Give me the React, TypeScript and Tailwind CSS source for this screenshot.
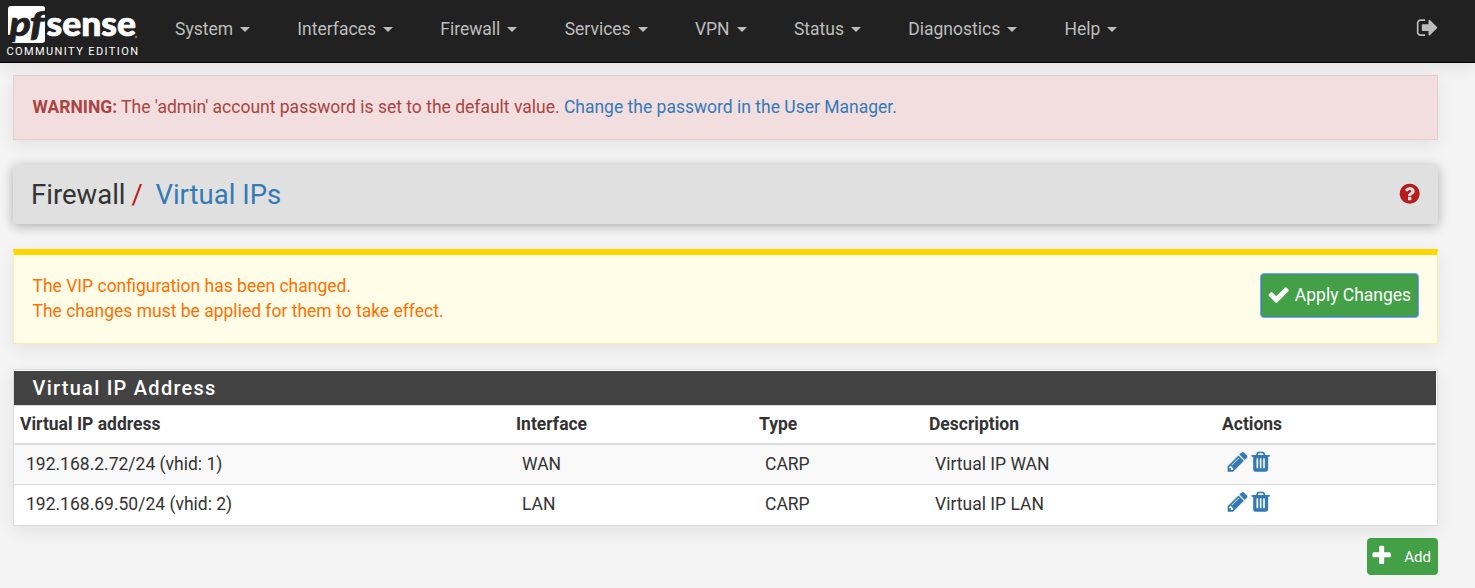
import React from "react";

const icons = {
  pencil:
    "M491 1536l91-91-235-235-91 91v107h128v128h107zm523-928q0-22-22-22-10 0-17 7l-542 542q-7 7-7 17 0 22 22 22 10 0 17-7l542-542q7-7 7-17zm-54-192l416 416-832 832h-416v-416zm683 96q0 53-37 90l-166 166-416-416 166-165q36-38 90-38 53 0 91 38l235 234q37 39 37 91z",
  trash:
    "M704 1376v-704q0-14-9-23t-23-9h-64q-14 0-23 9t-9 23v704q0 14 9 23t23 9h64q14 0 23-9t9-23zm256 0v-704q0-14-9-23t-23-9h-64q-14 0-23 9t-9 23v704q0 14 9 23t23 9h64q14 0 23-9t9-23zm256 0v-704q0-14-9-23t-23-9h-64q-14 0-23 9t-9 23v704q0 14 9 23t23 9h64q14 0 23-9t9-23zm-544-992h448l-48-117q-7-9-17-11h-317q-10 2-17 11zm928 32v64q0 14-9 23t-23 9h-96v948q0 83-47 143.5t-113 60.5h-832q-66 0-113-58.5t-47-141.5v-952h-96q-14 0-23-9t-9-23v-64q0-14 9-23t23-9h309l70-167q15-37 54-63t79-26h320q40 0 79 26t54 63l70 167h309q14 0 23 9t9 23z",
  check:
    "M1671 566q0 40-28 68l-724 724-136 136q-28 28-68 28t-68-28l-136-136-362-362q-28-28-28-68t28-68l136-136q28-28 68-28t68 28l294 295 656-657q28-28 68-28t68 28l136 136q28 28 28 68z",
  plus: "M1600 736v192q0 40-28 68t-68 28h-416v416q0 40-28 68t-68 28h-192q-40 0-68-28t-28-68v-416h-416q-40 0-68-28t-28-68v-192q0-40 28-68t68-28h416v-416q0-40 28-68t68-28h192q40 0 68 28t28 68v416h416q40 0 68 28t28 68z",
  question:
    "M1024 1376v-192q0-14-9-23t-23-9h-192q-14 0-23 9t-9 23v192q0 14 9 23t23 9h192q14 0 23-9t9-23zm256-672q0-88-55.5-163t-138.5-116-170-41q-243 0-371 213-15 24 8 42l132 100q7 6 19 6 16 0 25-12 53-68 86-92 34-24 86-24 48 0 85.5 26t37.5 59q0 38-20 61t-68 45q-63 28-115.5 86.5t-52.5 125.5v36q0 14 9 23t23 9h192q14 0 23-9t9-23q0-19 21.5-49.5t54.5-49.5q32-18 49-28.5t46-35 44.5-48 28-60.5 12.5-81zm384 192q0 209-103 385.5t-279.5 279.5-385.5 103-385.5-103-279.5-279.5-103-385.5 103-385.5 279.5-279.5 385.5-103 385.5 103 279.5 279.5 103 385.5z",
  signOut:
    "M704 1440q0 4 1 20t.5 26.5-3 23.5-10 19.5-20.5 6.5h-320q-119 0-203.5-84.5t-84.5-203.5v-704q0-119 84.5-203.5t203.5-84.5h320q13 0 22.5 9.5t9.5 22.5q0 4 1 20t.5 26.5-3 23.5-10 19.5-20.5 6.5h-320q-66 0-113 47t-47 113v704q0 66 47 113t113 47h312l11.5 1 11.5 3 8 5.5 7 9 2 13.5zm928-544q0 26-19 45l-544 544q-19 19-45 19t-45-19-19-45v-288h-448q-26 0-45-19t-19-45v-384q0-26 19-45t45-19h448v-288q0-26 19-45t45-19 45 19l544 544q19 19 19 45z",
};

function Icon({ name, className = "" }: { name: keyof typeof icons; className?: string }) {
  return (
    <svg viewBox="0 0 1792 1792" fill="currentColor" aria-hidden="true" className={`size-[23.33px] shrink-0 ${className}`}>
      <path d={icons[name]} />
    </svg>
  );
}

function Logo() {
  return (
    <svg width="140" height="58" viewBox="0 0 140 58" className="shrink-0">
      <path d="M11 6H42.500Q45 6 45 8.500V40Q45 43 42 43H12L14 34L8 35V9Q8 6 11 6Z" fill="#fff" />
      <g fill="#212121" stroke="#212121" strokeWidth=".6" className="font-['Lato'] text-[35px] font-black italic">
        <text x="9.500" y="36" textLength="21.500" lengthAdjust="spacingAndGlyphs">p</text>
        <text x="29.500" y="36" textLength="15" lengthAdjust="spacingAndGlyphs">f</text>
      </g>
      <text x="46.500" y="36" textLength="89.500" lengthAdjust="spacingAndGlyphs" fill="#fff" stroke="#fff" strokeWidth=".7" className="font-['Lato'] text-[34px] font-black">sense</text>
      <circle cx="136" cy="37" r="1.300" fill="#777" />
      <text x="6.500" y="55" textLength="131.500" fill="#fff" className="font-['Roboto'] text-[11px]">COMMUNITY EDITION</text>
    </svg>
  );
}

const menu = ["System", "Interfaces", "Firewall", "Services", "VPN", "Status", "Diagnostics", "Help"];

const rows = [
  ["192.168.2.72/24 (vhid: 1)", "WAN", "CARP", "Virtual IP WAN"],
  ["192.168.69.50/24 (vhid: 2)", "LAN", "CARP", "Virtual IP LAN"],
];

const grid = "grid grid-cols-[496px_243px_170px_293px_1fr]";

export default function App() {
  return (
    <div className="h-[588px] overflow-hidden bg-[#f4f4f4] font-['Roboto',sans-serif] text-[17.5px] leading-[25px] text-[#333]">
      <nav className="flex h-[63px] border-b border-black bg-[#212121] text-[#bdbdbd] shadow-[0_6px_14px_rgba(0,0,0,0.07)]">
        <Logo />
        <ul className="ml-[35px] flex gap-[47.3px] pt-[17px]">
          {menu.map((m) => (
            <li key={m} className="flex h-[25px] items-center gap-[7px]">
              {m}
              <span className="-mt-px border-x-5 border-t-5 border-x-transparent border-t-[#bdbdbd]" />
            </li>
          ))}
        </ul>
        <Icon name="signOut" className="mt-[15.5px] mr-[36px] ml-auto" />
      </nav>

      <main className="mr-[37px] ml-[13px] pt-3">
        <div className="h-[65px] border border-[#ebccd1] bg-[#f2dede] px-[18.500px] py-[19px] text-[#a94442] shadow-[0_5px_16px_rgba(0,0,0,0.08)]">
          <b>WARNING:</b> The 'admin' account password is set to the default value.{" "}
          <a className="text-[#337ab7]">Change the password in the User Manager.</a>
        </div>

        <header className="mt-[25px] flex h-[59px] items-center justify-between rounded-[3px] bg-[#e0e0e0] pr-[17px] pl-[18px] text-[27.5px] shadow-[0_2px_12px_rgba(0,0,0,0.3)]">
          <h1 className="flex">
            Firewall<span className="mr-[12.5px] ml-[6px] text-[#b71c1c]">/</span>
            <a className="text-[#337ab7]">Virtual IPs</a>
          </h1>
          <Icon name="question" className="-mt-px text-[#b71c1c]" />
        </header>

        <div className="mt-[25px] flex h-[95px] justify-between border border-t-[6px] border-[#ffecb3] border-t-[#ffd600] bg-[#fffde7] pr-[18px] pl-[18.500px] text-[#ff6f00] shadow-[0_5px_16px_rgba(0,0,0,0.07)]">
          <p className="pt-[19px]">
            The VIP configuration has been changed.
            <br />
            The changes must be applied for them to take effect.
          </p>
          <button className="mt-[18px] flex h-[45px] w-[159px] items-center rounded-[4px] border border-[#74a9ee] bg-[#43a047] pl-[6px] text-white inset-ring inset-ring-[#3f8795]">
            <Icon name="check" className="-mt-[2px] mr-[4.5px]" />
            Apply Changes
          </button>
        </div>

        <section className="mt-[25px] border border-[#ddd] bg-white pr-px shadow-[0_5px_16px_rgba(0,0,0,0.08)]">
          <h2 className="mt-px h-[34px] bg-[#424242] pl-[18.500px] text-[20px] leading-[34px] font-medium tracking-[1.25px] text-white">
            Virtual IP Address
          </h2>
          <div className={`${grid} h-10 border-t border-b-2 border-[#ddd] pl-[6px] leading-[37px] font-bold`}>
            {["Virtual IP address", "Interface", "Type", "Description", "Actions"].map((h) => (
              <span key={h}>{h}</span>
            ))}
          </div>
          {rows.map((r, i) => (
            <div key={r[0]} className={`${grid} h-10 pl-3 leading-[39px] ${i ? "" : "border-b border-[#ddd] bg-[#f9f9f9]"}`}>
              {r.map((c, j) => (
                <span key={j}>{c}</span>
              ))}
              <span className="-ml-[2.3px] flex pt-[5px] text-[#337ab7]">
                <Icon name="pencil" />
                <Icon name="trash" />
              </span>
            </div>
          ))}
        </section>

        <div className="mt-3 flex justify-end">
          <button className="flex h-[37px] w-[71px] items-center rounded-[4px] bg-[#43a047] pl-[3px] text-[15px] text-white">
            <Icon name="plus" className="mr-[11px] -mt-px" />
            <span className="mt-px">Add</span>
          </button>
        </div>
      </main>
    </div>
  );
}
